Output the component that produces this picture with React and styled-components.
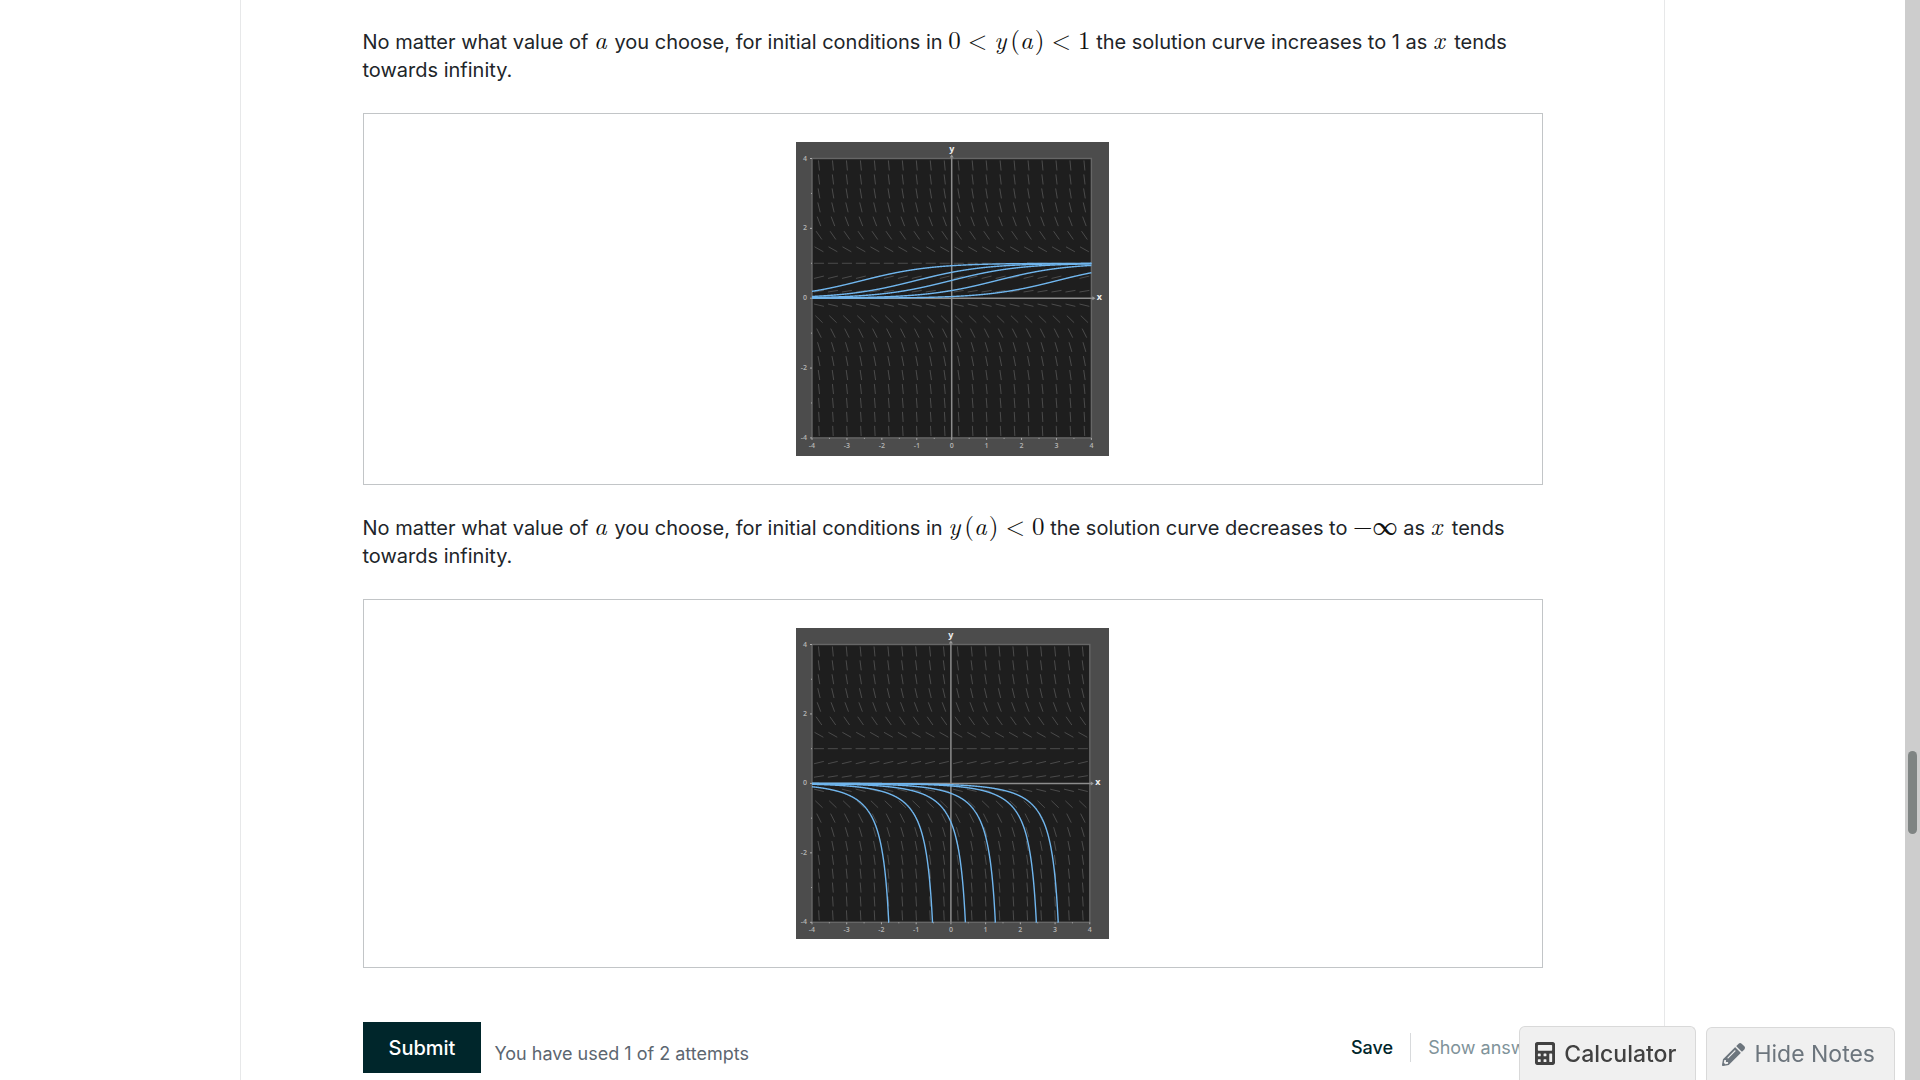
import React from "react";
import styled, { createGlobalStyle } from "styled-components";
import { FaCalculator, FaPencilAlt } from "react-icons/fa";

const GlobalStyle = createGlobalStyle`
  *, *::before, *::after { box-sizing: border-box; }
  body {
    margin: 0;
    background: #fff;
    color: #212529;
    font-family: Inter, "Liberation Sans", sans-serif;
    font-size: 20px;
    line-height: 28px;
  }
`;

const Window = styled.div`
  display: flex;
  height: 100vh;
  overflow: hidden;
`;

const Viewport = styled.div`
  flex: 1;
  min-width: 0;
  overflow: hidden;
  display: flex;
  justify-content: center;
`;

const ScrollTrack = styled.div`
  position: relative;
  flex: 0 0 15px;
  background: #cdcdcd;
`;

const ScrollThumb = styled.div`
  position: absolute;
  left: 3px;
  right: 3px;
  top: 69.5%;
  height: 7.7%;
  border-radius: 5px;
  background: #7f8483;
`;

const Main = styled.main`
  width: 100%;
  max-width: 1425px;
  min-height: 100vh;
  border: solid #e7e8e9;
  border-width: 0 1px;
  padding: 28px 24px 0;
`;

const Problem = styled.section`
  max-width: 1180px;
  margin: 0 auto;
`;

const Statement = styled.p`
  margin: 0 0 29px;
`;

const Phrase = styled.span`
  white-space: nowrap;
`;

const Maths = styled.span`
  font-family: "Latin Modern Roman", "LM Roman 10", "Liberation Serif", serif;
  font-size: 25px;
  line-height: 20px;
  color: #111;
  white-space: nowrap;
`;

const Var = styled.i`
  padding-right: ${(p) => (p.$spaced ? 4 : 2)}px;
`;

const Rel = styled.span`
  padding: 0 7px;
`;

const Figure = styled.figure`
  margin: 0 0 29px;
  padding: 28px;
  border: 1px solid #c2c5c7;
  display: flex;
  justify-content: center;
  svg { display: block; }
`;

const Actions = styled.div`
  display: flex;
  align-items: flex-start;
  justify-content: space-between;
  margin-top: 54px;
`;

const SubmitGroup = styled.div`
  display: flex;
  align-items: flex-start;
  gap: 13px;
`;

const SubmitButton = styled.button`
  height: 51px;
  padding: 0 26px;
  border: 0;
  background: #00262b;
  color: #fff;
  font: 500 20px/24px Inter, sans-serif;
`;

const Attempts = styled.span`
  padding-top: 18px;
  font-size: 18px;
  color: #5c6670;
`;

const LinkGroup = styled.div`
  display: flex;
  align-items: center;
  padding-top: 11px;
`;

const TextButton = styled.button`
  height: 29px;
  padding: 0 17px;
  border: 0;
  border-left: ${(p) => (p.$divided ? "1px solid #d8dadc" : "0")};
  background: none;
  color: ${(p) => (p.$muted ? "#80939a" : "#00262b")};
  font: ${(p) => (p.$muted ? 400 : 500)} 18px/24px Inter, sans-serif;
  &:last-child { padding-right: 0; }
`;

const Toolbar = styled.div`
  position: fixed;
  right: 25px;
  bottom: 0;
  display: flex;
  align-items: flex-end;
  gap: 10px;
`;

const ToolButton = styled.button`
  height: ${(p) => p.$height}px;
  display: flex;
  align-items: center;
  gap: 9px;
  padding: 0 19px 0 15px;
  border: 1px solid #d9d9d9;
  border-bottom: 0;
  border-radius: 6px 6px 0 0;
  background: #f0f0f0;
  color: ${(p) => p.$color};
  font: ${(p) => p.$weight} 23px/28px Inter, sans-serif;
  svg {
    width: ${(p) => p.$icon}px;
    height: 23px;
  }
`;

const X0 = 16;
const Y0 = 16.5;

function SlopeField({ title, size, height, curve, constants }) {
  const unit = size / 8;
  const px = (x) => X0 + (x + 4) * unit;
  const py = (y) => Y0 + (4 - y) * unit;
  const dashes = [];
  for (let i = 0; i < 20; i++) {
    for (let j = 0; j < 20; j++) {
      const x = -3.8 + i * 0.4;
      const y = -3.8 + j * 0.4;
      const slope = y * (1 - y);
      const n = 0.145 / Math.hypot(1, slope);
      dashes.push(
        `M${px(x - n).toFixed(2)} ${py(y - n * slope).toFixed(2)}L${px(x + n).toFixed(2)} ${py(y + n * slope).toFixed(2)}`
      );
    }
  }
  const paths = constants.map((c) => {
    const pts = [];
    for (let x = -4; x <= 4.0001; x += 0.005) {
      const y = curve(x, c);
      const outside = y < -4 || y > 4;
      pts.push(`${px(x).toFixed(2)} ${py(outside ? -4 : y).toFixed(2)}`);
      if (outside) break;
    }
    return "M" + pts.join("L");
  });
  const ticks = [-4, -3, -2, -1, 0, 1, 2, 3, 4];
  const halves = [-3.5, -2.5, -1.5, -0.5, 0.5, 1.5, 2.5, 3.5];
  return (
    <svg width="313" height={height} role="img" aria-label={title}>
      <rect width="313" height={height} fill="#4c4c4c" />
      <rect x={X0} y={Y0} width={size} height={size} fill="#1e1e1e" stroke="#666" strokeWidth="1.4" />
      <path d={dashes.join("")} stroke="#575757" strokeWidth="0.8" fill="none" />
      <g stroke="#aaa" strokeWidth="1">
        {ticks.map((t) => <path key={t} d={`M${px(t)} ${Y0 + size}v2`} />)}
        {halves.map((t) => <path key={t} d={`M${px(t)} ${Y0 + size}v1`} />)}
        {[-4, -2, 0, 2, 4].map((t) => <path key={t} d={`M${X0 - 2} ${py(t)}h2`} />)}
        {[-3, -1, 1, 3].map((t) => <path key={t} d={`M${X0 - 1} ${py(t)}h1`} />)}
      </g>
      <path d={`M${X0} ${py(0)}H${X0 + size + 2}M${px(0)} ${Y0 + size}V${Y0 - 1}`} stroke="#8d8d8d" strokeWidth="1.5" />
      <path
        d={`M${X0 + size + 1} ${py(0) - 2}l3 2l-3 2zM${px(0) - 2} ${Y0 - 1}l2 -3l2 3z`}
        fill="#999"
      />
      {paths.map((d) => <path key={d} d={d} stroke="#70b6ee" strokeWidth="1.4" fill="none" />)}
      <g fill="#b5b5b5" fontFamily="Open Sans, sans-serif" fontSize="7" fontWeight="600" textAnchor="middle">
        {ticks.map((t) => <text key={t} x={px(t)} y={Y0 + size + 10}>{t}</text>)}
      </g>
      <g fill="#b5b5b5" fontFamily="Open Sans, sans-serif" fontSize="7" fontWeight="600" textAnchor="end">
        {[-4, -2, 0, 2, 4].map((t) => <text key={t} x={X0 - 5} y={py(t) + 2}>{t}</text>)}
      </g>
      <g fill="#eee" fontFamily="Open Sans, sans-serif" fontSize="9" fontWeight="700" textAnchor="middle">
        <text x={px(0)} y="10">y</text>
        <text x={X0 + size + 8} y={py(0) + 2}>x</text>
      </g>
    </svg>
  );
}

const logistic = (x, c) => 1 / (1 + c * Math.exp(-x));
const RISING = [0.075, 0.35, 0.96, 3.55, 20.2];
const FALLING = [-1.79, -0.53, 0.417, 1.28, 2.46, 3.09].map((x) => -1.25 * Math.exp(x));

export default function App() {
  return (
    <>
      <GlobalStyle />
      <Window>
        <Viewport>
          <Main>
            <Problem>
              <Statement>
                No matter what value of <Maths><Var>a</Var></Maths> you choose, for initial conditions in{" "}
                <Maths>0<Rel>&lt;</Rel><Var $spaced>y</Var>(<Var>a</Var>)<Rel>&lt;</Rel>1</Maths> the solution
                curve increases to 1 as <Maths><Var $spaced>x</Var></Maths> tends{" "}
                <Phrase>towards infinity.</Phrase>
              </Statement>
              <Figure>
                <SlopeField
                  title="Solution curves increasing to 1"
                  size={279.4}
                  height={314}
                  curve={logistic}
                  constants={RISING}
                />
              </Figure>
              <Statement>
                No matter what value of <Maths><Var>a</Var></Maths> you choose, for initial conditions in{" "}
                <Maths><Var $spaced>y</Var>(<Var>a</Var>)<Rel>&lt;</Rel>0</Maths> the solution curve decreases
                to <Maths>−∞</Maths> as <Maths><Var $spaced>x</Var></Maths> tends{" "}
                <Phrase>towards infinity.</Phrase>
              </Statement>
              <Figure>
                <SlopeField
                  title="Solution curves decreasing without bound"
                  size={277.8}
                  height={311}
                  curve={logistic}
                  constants={FALLING}
                />
              </Figure>
              <Actions>
                <SubmitGroup>
                  <SubmitButton type="button">Submit</SubmitButton>
                  <Attempts>You have used 1 of 2 attempts</Attempts>
                </SubmitGroup>
                <LinkGroup>
                  <TextButton type="button">Save</TextButton>
                  <TextButton type="button" $divided $muted>Show answer</TextButton>
                </LinkGroup>
              </Actions>
            </Problem>
          </Main>
        </Viewport>
        <ScrollTrack aria-hidden="true"><ScrollThumb /></ScrollTrack>
      </Window>
      <Toolbar>
        <ToolButton type="button" $height={54} $color="#414141" $weight={500} $icon={20}>
          <FaCalculator aria-hidden="true" />
          Calculator
        </ToolButton>
        <ToolButton type="button" $height={53} $color="#6c757d" $weight={400} $icon={23}>
          <FaPencilAlt aria-hidden="true" />
          Hide Notes
        </ToolButton>
      </Toolbar>
    </>
  );
}
